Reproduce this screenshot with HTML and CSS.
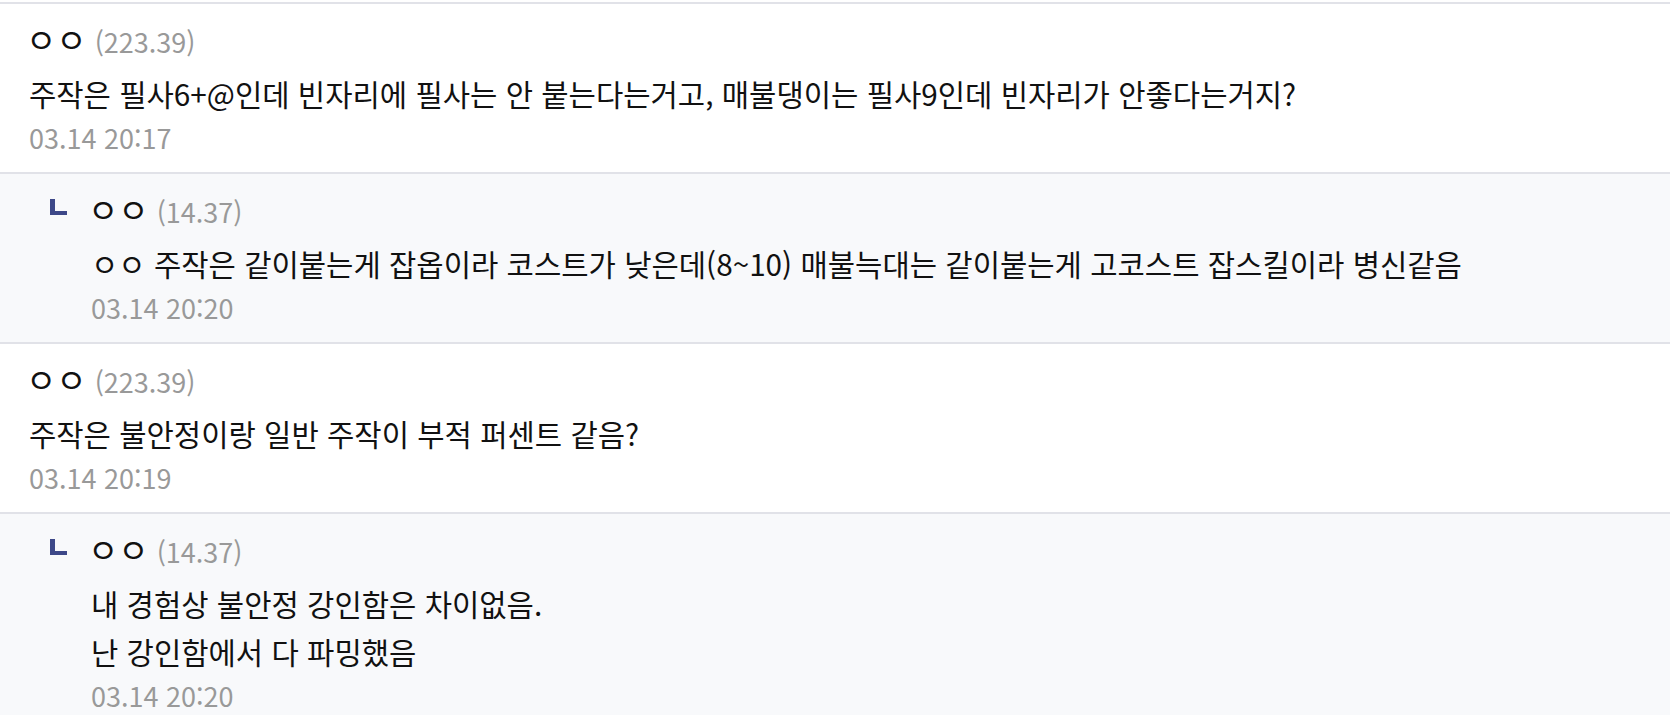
FILE: index.html
```html
<!DOCTYPE html>
<html lang="ko">
<head>
<meta charset="utf-8">
<title>댓글</title>
<link rel="stylesheet" href="styles.css">
</head>
<body>
<ul class="comments">
  <li class="comment">
    <div class="body">
      <div class="meta"><span class="name">ㅇㅇ</span><span class="ip">(223.39)</span></div>
      <p class="text">주작은 필사6+@인데 빈자리에 필사는 안 붙는다는거고, 매불댕이는 필사9인데 빈자리가 안좋다는거지?</p>
      <div class="date">03.14 20:17</div>
    </div>
  </li>
  <li class="comment reply">
    <span class="reply-mark"></span>
    <div class="body">
      <div class="meta"><span class="name">ㅇㅇ</span><span class="ip">(14.37)</span></div>
      <p class="text">ㅇㅇ 주작은 같이붙는게 잡옵이라 코스트가 낮은데(8~10) 매불늑대는 같이붙는게 고코스트 잡스킬이라 병신같음</p>
      <div class="date">03.14 20:20</div>
    </div>
  </li>
  <li class="comment">
    <div class="body">
      <div class="meta"><span class="name">ㅇㅇ</span><span class="ip">(223.39)</span></div>
      <p class="text">주작은 불안정이랑 일반 주작이 부적 퍼센트 같음?</p>
      <div class="date">03.14 20:19</div>
    </div>
  </li>
  <li class="comment reply">
    <span class="reply-mark"></span>
    <div class="body">
      <div class="meta"><span class="name">ㅇㅇ</span><span class="ip">(14.37)</span></div>
      <p class="text">내 경험상 불안정 강인함은 차이없음.<br>난 강인함에서 다 파밍했음</p>
      <div class="date">03.14 20:20</div>
    </div>
  </li>
</ul>
</body>
</html>
```

FILE: styles.css
```css
html, body {
  margin: 0;
  padding: 0;
  background: #ffffff;
}

body {
  font-family: "Noto Sans CJK KR", "Noto Sans", sans-serif;
  font-size: 27px;
  color: #111111;
  padding-top: 2px;
}

.comments {
  list-style: none;
  margin: 0;
  padding: 0;
  border-top: 2px solid #e1e2e8;
}

.comment {
  display: flex;
  padding: 14px 29px 14px;
  border-bottom: 2px solid #e1e2e8;
  background: #ffffff;
}

.comment.reply {
  background: #f8f9fb;
  padding-left: 50px;
}

.reply-mark {
  flex: none;
  width: 12px;
  height: 12px;
  margin-top: 11px;
  margin-right: 24px;
  border-left: 5px solid #3d4888;
  border-bottom: 4px solid #3d4888;
}

.body {
  flex: 1;
  min-width: 0;
}

.meta {
  height: 48px;
  line-height: 48px;
  margin-bottom: 4px;
  white-space: nowrap;
}

.name {
  color: #111111;
  font-size: 33px;
  line-height: 1;
  margin-left: -3px;
}

.ip {
  color: #999999;
  margin-left: 8px;
}

.text {
  margin: 0;
  font-size: 29.7px;
  line-height: 48px;
  color: #111111;
}

.date {
  line-height: 40px;
  color: #999999;
}
```
